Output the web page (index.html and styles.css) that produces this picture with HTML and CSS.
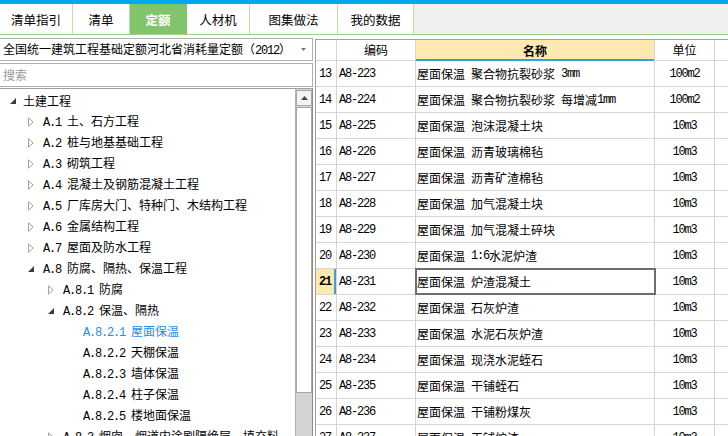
FILE: index.html
```html
<!DOCTYPE html>
<html lang="zh-CN">
<head>
<meta charset="utf-8">
<title>定额</title>
<link rel="stylesheet" href="styles.css">
</head>
<body>
<div class="topbar"></div>
<nav class="tabs">
  <div class="tab">清单指引</div>
  <div class="tab">清单</div>
  <div class="tab active">定额</div>
  <div class="tab">人材机</div>
  <div class="tab">图集做法</div>
  <div class="tab">我的数据</div>
</nav>
<div class="main">
  <aside class="left">
    <div class="select">
      <span>全国统一建筑工程基础定额河北省消耗量定额（<span class="m">2012</span>）</span>
      <svg class="caret" width="5" height="3" viewBox="0 0 5 3"><path d="M0 0H5L2.5 3Z" fill="#7a7a7a"/></svg>
    </div>
    <div class="search">搜索</div>
    <div class="tree">
      <div class="tree-list">
        <div class="item l0"><span class="tw"><svg class="exp" width="6" height="6" viewBox="0 0 6 6"><path d="M6 0V6H0Z" fill="#3c3c3c"/></svg></span><span>土建工程</span></div>
        <div class="item l1"><span class="tw"><svg width="6" height="10" viewBox="0 0 6 10"><path d="M0.5 0.8L5.2 5L0.5 9.2Z" fill="#fff" stroke="#a3a3a3"/></svg></span><span><span class="m">A.1 </span>土、石方工程</span></div>
        <div class="item l1"><span class="tw"><svg width="6" height="10" viewBox="0 0 6 10"><path d="M0.5 0.8L5.2 5L0.5 9.2Z" fill="#fff" stroke="#a3a3a3"/></svg></span><span><span class="m">A.2 </span>桩与地基基础工程</span></div>
        <div class="item l1"><span class="tw"><svg width="6" height="10" viewBox="0 0 6 10"><path d="M0.5 0.8L5.2 5L0.5 9.2Z" fill="#fff" stroke="#a3a3a3"/></svg></span><span><span class="m">A.3 </span>砌筑工程</span></div>
        <div class="item l1"><span class="tw"><svg width="6" height="10" viewBox="0 0 6 10"><path d="M0.5 0.8L5.2 5L0.5 9.2Z" fill="#fff" stroke="#a3a3a3"/></svg></span><span><span class="m">A.4 </span>混凝土及钢筋混凝土工程</span></div>
        <div class="item l1"><span class="tw"><svg width="6" height="10" viewBox="0 0 6 10"><path d="M0.5 0.8L5.2 5L0.5 9.2Z" fill="#fff" stroke="#a3a3a3"/></svg></span><span><span class="m">A.5 </span>厂库房大门、特种门、木结构工程</span></div>
        <div class="item l1"><span class="tw"><svg width="6" height="10" viewBox="0 0 6 10"><path d="M0.5 0.8L5.2 5L0.5 9.2Z" fill="#fff" stroke="#a3a3a3"/></svg></span><span><span class="m">A.6 </span>金属结构工程</span></div>
        <div class="item l1"><span class="tw"><svg width="6" height="10" viewBox="0 0 6 10"><path d="M0.5 0.8L5.2 5L0.5 9.2Z" fill="#fff" stroke="#a3a3a3"/></svg></span><span><span class="m">A.7 </span>屋面及防水工程</span></div>
        <div class="item l1"><span class="tw"><svg width="6" height="6" viewBox="0 0 6 6"><path d="M6 0V6H0Z" fill="#3c3c3c"/></svg></span><span><span class="m">A.8 </span>防腐、隔热、保温工程</span></div>
        <div class="item l2"><span class="tw"><svg width="6" height="10" viewBox="0 0 6 10"><path d="M0.5 0.8L5.2 5L0.5 9.2Z" fill="#fff" stroke="#a3a3a3"/></svg></span><span><span class="m">A.8.1 </span>防腐</span></div>
        <div class="item l2"><span class="tw"><svg width="6" height="6" viewBox="0 0 6 6"><path d="M6 0V6H0Z" fill="#3c3c3c"/></svg></span><span><span class="m">A.8.2 </span>保温、隔热</span></div>
        <div class="item l3 selected"><span class="tw"></span><span><span class="m">A.8.2.1 </span>屋面保温</span></div>
        <div class="item l3"><span class="tw"></span><span><span class="m">A.8.2.2 </span>天棚保温</span></div>
        <div class="item l3"><span class="tw"></span><span><span class="m">A.8.2.3 </span>墙体保温</span></div>
        <div class="item l3"><span class="tw"></span><span><span class="m">A.8.2.4 </span>柱子保温</span></div>
        <div class="item l3"><span class="tw"></span><span><span class="m">A.8.2.5 </span>楼地面保温</span></div>
        <div class="item l2"><span class="tw"><svg width="6" height="10" viewBox="0 0 6 10"><path d="M0.5 0.8L5.2 5L0.5 9.2Z" fill="#fff" stroke="#a3a3a3"/></svg></span><span><span class="m">A.8.3 </span>烟囱、烟道内涂刷隔绝层、填充料</span></div>
      </div>
      <div class="vscroll">
        <div class="sbtn"><svg width="7" height="4" viewBox="0 0 7 4"><path d="M0 4L3.5 0L7 4Z" fill="#4a4a4a"/></svg></div>
        <div class="thumb"></div>
      </div>
    </div>
  </aside>
  <section class="grid">
    <div class="row head">
      <div class="c num"></div>
      <div class="c code">编码</div>
      <div class="c name active-col">名称</div>
      <div class="c unit">单位</div>
      <div class="c extra"></div>
    </div>
    <div class="row"><div class="c num m">13</div><div class="c code m">A8-223</div><div class="c name">屋面保温<span class="m"> </span>聚合物抗裂砂浆<span class="m"> 3mm</span></div><div class="c unit m">100m2</div><div class="c extra"></div></div>
    <div class="row"><div class="c num m">14</div><div class="c code m">A8-224</div><div class="c name">屋面保温<span class="m"> </span>聚合物抗裂砂浆<span class="m"> </span>每增减<span class="m">1mm</span></div><div class="c unit m">100m2</div><div class="c extra"></div></div>
    <div class="row"><div class="c num m">15</div><div class="c code m">A8-225</div><div class="c name">屋面保温<span class="m"> </span>泡沫混凝土块</div><div class="c unit m">10m3</div><div class="c extra"></div></div>
    <div class="row"><div class="c num m">16</div><div class="c code m">A8-226</div><div class="c name">屋面保温<span class="m"> </span>沥青玻璃棉毡</div><div class="c unit m">10m3</div><div class="c extra"></div></div>
    <div class="row"><div class="c num m">17</div><div class="c code m">A8-227</div><div class="c name">屋面保温<span class="m"> </span>沥青矿渣棉毡</div><div class="c unit m">10m3</div><div class="c extra"></div></div>
    <div class="row"><div class="c num m">18</div><div class="c code m">A8-228</div><div class="c name">屋面保温<span class="m"> </span>加气混凝土块</div><div class="c unit m">10m3</div><div class="c extra"></div></div>
    <div class="row"><div class="c num m">19</div><div class="c code m">A8-229</div><div class="c name">屋面保温<span class="m"> </span>加气混凝土碎块</div><div class="c unit m">10m3</div><div class="c extra"></div></div>
    <div class="row"><div class="c num m">20</div><div class="c code m">A8-230</div><div class="c name">屋面保温<span class="m"> 1:6</span>水泥炉渣</div><div class="c unit m">10m3</div><div class="c extra"></div></div>
    <div class="row current"><div class="c num m">21</div><div class="c code m">A8-231</div><div class="c name focus">屋面保温<span class="m"> </span>炉渣混凝土</div><div class="c unit m">10m3</div><div class="c extra"></div></div>
    <div class="row"><div class="c num m">22</div><div class="c code m">A8-232</div><div class="c name">屋面保温<span class="m"> </span>石灰炉渣</div><div class="c unit m">10m3</div><div class="c extra"></div></div>
    <div class="row"><div class="c num m">23</div><div class="c code m">A8-233</div><div class="c name">屋面保温<span class="m"> </span>水泥石灰炉渣</div><div class="c unit m">10m3</div><div class="c extra"></div></div>
    <div class="row"><div class="c num m">24</div><div class="c code m">A8-234</div><div class="c name">屋面保温<span class="m"> </span>现浇水泥蛭石</div><div class="c unit m">10m3</div><div class="c extra"></div></div>
    <div class="row"><div class="c num m">25</div><div class="c code m">A8-235</div><div class="c name">屋面保温<span class="m"> </span>干铺蛭石</div><div class="c unit m">10m3</div><div class="c extra"></div></div>
    <div class="row"><div class="c num m">26</div><div class="c code m">A8-236</div><div class="c name">屋面保温<span class="m"> </span>干铺粉煤灰</div><div class="c unit m">10m3</div><div class="c extra"></div></div>
    <div class="row"><div class="c num m">27</div><div class="c code m">A8-237</div><div class="c name">屋面保温<span class="m"> </span>干铺炉渣</div><div class="c unit m">10m3</div><div class="c extra"></div></div>
  </section>
</div>
</body>
</html>
```

FILE: styles.css
```css
html, body {
  margin: 0;
  padding: 0;
}
body {
  width: 728px;
  height: 436px;
  overflow: hidden;
  background: #fff;
  color: #000;
  font-family: "Noto Sans CJK SC", "Noto Sans", sans-serif;
  font-size: 12px;
  line-height: 14px;
}
.m {
  font-family: "Liberation Mono", "Noto Sans CJK SC", monospace;
  font-size: 12px;
  letter-spacing: -1.2px;
  white-space: pre;
}

/* top */
.topbar {
  height: 4px;
  background: #00a8ec;
}
.tabs {
  display: flex;
  height: 30px;
  background: #f0f0f0;
  border-bottom: 1px solid #98d585;
}
.tab {
  box-sizing: border-box;
  display: flex;
  align-items: center;
  justify-content: center;
  background: #fff;
  border-right: 1px solid #b8e2a6;
  padding-top: 2px;
  font-size: 12.5px;
}
.tab:nth-child(1) { width: 73px; }
.tab:nth-child(2) { width: 57px; }
.tab:nth-child(3) { width: 57px; }
.tab:nth-child(4) { width: 63px; }
.tab:nth-child(5) { width: 88px; }
.tab:nth-child(6) { width: 76px; }
.tab.active {
  background: #80c46c;
  color: #fff;
  font-weight: bold;
  border-right-color: #80c46c;
}

/* main */
.main {
  display: flex;
  height: 401px;
}
.left {
  width: 313px;
  flex: none;
  display: flex;
  flex-direction: column;
  padding-top: 3px;
  box-sizing: border-box;
}
.select {
  box-sizing: border-box;
  height: 23px;
  border: 1px solid #b0b0b0;
  border-left: 0;
  display: flex;
  align-items: center;
  justify-content: space-between;
  padding: 0 6px 0 3px;
  white-space: nowrap;
}
.caret { flex: none; }
.search {
  box-sizing: border-box;
  height: 24px;
  margin-top: 2px;
  border: 1px solid #b0b0b0;
  border-left: 0;
  display: flex;
  align-items: center;
  padding-left: 3px;
  color: #9a9a9a;
}
.tree {
  flex: 1;
  margin-top: 1px;
  border-top: 1px solid #a0a0a0;
  border-right: 1px solid #8c8c8c;
  display: flex;
  min-height: 0;
}
.tree-list {
  flex: 1;
  padding-top: 1px;
  white-space: nowrap;
  overflow: hidden;
}
.item {
  height: 21px;
  display: flex;
  align-items: center;
}
.item.l0 { padding-left: 8px; }
.item.l1 { padding-left: 28px; }
.item.l2 { padding-left: 48px; }
.item.l3 { padding-left: 68px; }
.tw {
  width: 15px;
  flex: none;
  display: flex;
  align-items: center;
}
.tw .exp { margin-left: 2px; }
.item.selected { color: #1a8cf0; }

.vscroll {
  width: 17px;
  flex: none;
  box-sizing: border-box;
  border-left: 1px solid #b4b4b4;
  background: #d4d4d4;
  display: flex;
  flex-direction: column;
  padding-top: 1px;
}
.sbtn {
  height: 16px;
  box-sizing: border-box;
  background: #f4f4f4;
  border: 1px solid #a8a8a8;
  display: flex;
  align-items: center;
  justify-content: center;
}
.thumb {
  height: 286px;
  margin-top: 1px;
  box-sizing: border-box;
  background: #fff;
  border: 1px solid #a8a8a8;
}

/* grid */
.grid {
  flex: 1;
  margin-left: 2px;
  margin-top: 4px;
  border-left: 1px solid #a0a0a0;
  border-top: 1px solid #a0a0a0;
  overflow: hidden;
}
.row {
  display: grid;
  grid-template-columns: 21px 79px 239px 60px 1fr;
  height: 26px;
  box-sizing: border-box;
  border-bottom: 1px solid #d6d6d6;
}
.row.head {
  height: 21px;
}
.c {
  box-sizing: border-box;
  border-right: 1px solid #d6d6d6;
  display: flex;
  align-items: center;
  white-space: nowrap;
  overflow: hidden;
}
.c.num { padding-left: 3px; }
.c.code { padding-left: 2px; }
.c.name { padding-left: 1px; }
.c.unit { justify-content: center; }
.c.extra { border-right: 0; }
.head .c { justify-content: center; padding: 0; }
.head .active-col {
  background: #feeab0;
  font-weight: bold;
  box-shadow: inset 0 -2px 0 #3a9ed9;
  margin-bottom: -1px;
}
.current .num {
  background: #feeab0;
  font-weight: bold;
  box-shadow: inset -2px 0 0 #3a9ed9;
}
.focus {
  position: relative;
  outline: 2px solid #6e6e6e;
  outline-offset: -1px;
}
```
